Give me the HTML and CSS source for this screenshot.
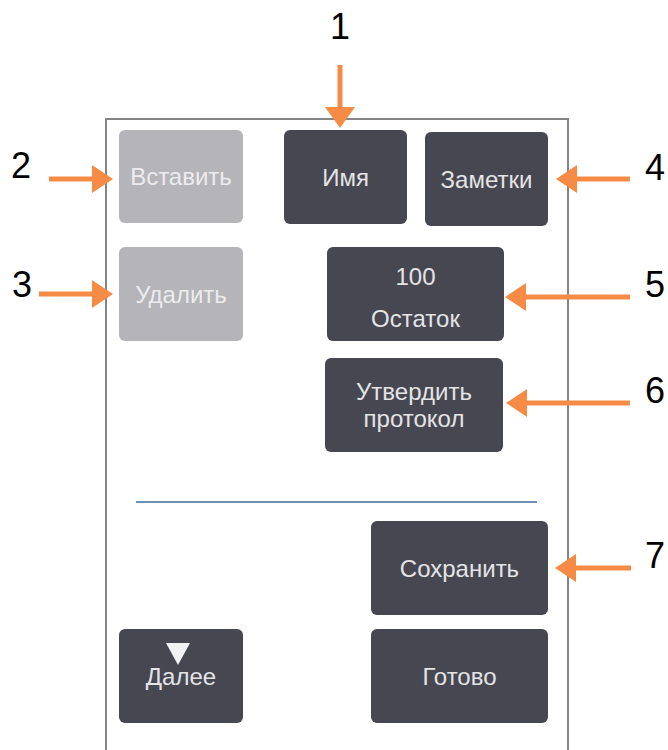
FILE: index.html
```html
<!DOCTYPE html>
<html lang="ru">
  <head>
    <meta charset="UTF-8" />
    <meta name="viewport" content="width=device-width, initial-scale=1.0" />
    <title>Протокол</title>
    <link rel="stylesheet" href="styles.css">
  </head>
  <body>
    <div class="page">
      <div class="panel">
        <div class="row row-top">
          <div class="btn btn-small btn-off">Вставить</div>
          <div class="btn btn-name">Имя</div>
          <div class="btn btn-notes">Заметки</div>
        </div>

        <div class="row row-second">
          <div class="btn btn-small btn-off">Удалить</div>
          <div class="btn btn-wide btn-rest">
            <span>100</span>
            <span>Остаток</span>
          </div>
        </div>

        <div class="row row-third">
          <div class="btn btn-wide btn-approve">Утвердить<br />протокол</div>
        </div>

        <div class="divider"></div>

        <div class="row row-save">
          <div class="btn btn-wide btn-save">Сохранить</div>
        </div>

        <div class="row row-bottom">
          <div class="btn btn-small btn-next">
            <span class="down"></span>
            <span>Далее</span>
          </div>
          <div class="btn btn-wide btn-done">Готово</div>
        </div>
      </div>

      <svg class="callouts" width="668" height="750" viewBox="0 0 668 750">
        <g class="arrow">
          <!-- 1 -->
          <rect x="337.5" y="65" width="5" height="44" />
          <polygon points="325,107 355,107 340,128" />
          <!-- 2 -->
          <rect x="49" y="176.5" width="45" height="5" />
          <polygon points="92,165 92,193 113,179" />
          <!-- 3 -->
          <rect x="39" y="291.5" width="55" height="5" />
          <polygon points="92,280 92,308 113,294" />
          <!-- 4 -->
          <rect x="575" y="176.5" width="55" height="5" />
          <polygon points="577,165 577,193 556,179" />
          <!-- 5 -->
          <rect x="524" y="294.5" width="106" height="5" />
          <polygon points="526,283 526,311 505,297" />
          <!-- 6 -->
          <rect x="525" y="400.5" width="105" height="5" />
          <polygon points="527,389 527,417 506,403" />
          <!-- 7 -->
          <rect x="574" y="565.5" width="57" height="5" />
          <polygon points="576,554 576,582 555,568" />
        </g>
        <g class="num">
          <text x="330" y="39">1</text>
          <text x="11" y="178">2</text>
          <text x="12" y="297">3</text>
          <text x="645" y="180">4</text>
          <text x="645" y="297">5</text>
          <text x="645" y="403">6</text>
          <text x="645" y="568">7</text>
        </g>
      </svg>
    </div>
  </body>
</html>
```

FILE: styles.css
```css
* {
  margin: 0;
  padding: 0;
  box-sizing: border-box;
}

body {
  font-family: "Liberation Sans", Arial, sans-serif;
  background: #fff;
  overflow: hidden;
}

.page {
  position: relative;
  width: 668px;
  height: 750px;
  padding: 118px 0 0 105px;
  overflow: hidden;
}

.panel {
  width: 464px;
  height: 720px;
  border: 2px solid #858585;
  border-bottom: none;
  padding: 10px 12px;
}

.row {
  display: flex;
  align-items: flex-start;
}

.btn {
  display: flex;
  flex-direction: column;
  align-items: center;
  justify-content: center;
  height: 94px;
  border-radius: 6px;
  background: #474751;
  color: #e4e4e6;
  font-size: 24px;
  line-height: 27px;
  text-align: center;
}

.btn-off {
  background: #b5b4b9;
  color: #ececee;
}

.btn-small {
  width: 124px;
}

.btn-wide {
  width: 177px;
}

/* first row */
.row-top .btn-small {
  height: 93px;
}

.btn-name {
  width: 123px;
  margin-left: 41px;
}

.btn-notes {
  width: 123px;
  margin-left: 18px;
  margin-top: 2px;
}

/* second row */
.row-second {
  margin-top: 21px;
}

.btn-rest {
  margin-left: 84px;
  line-height: 42px;
  padding-top: 7px;
}

/* third row */
.row-third {
  margin-top: 17px;
}

.btn-approve {
  width: 178px;
  margin-left: 206px;
}

.divider {
  margin: 49px 0 0 17px;
  width: 401px;
  height: 2px;
  background: #6f8fb0;
}

.row-save {
  margin-top: 18px;
}

.btn-save {
  margin-left: 252px;
}

.row-bottom {
  margin-top: 14px;
}

.btn-next {
  justify-content: flex-start;
  padding-top: 14px;
  line-height: 24px;
}

.down {
  width: 0;
  height: 0;
  border-left: 12.5px solid transparent;
  border-right: 12.5px solid transparent;
  border-top: 22px solid #f2f2f4;
  margin-left: -6px;
}

.btn-done {
  margin-left: 128px;
}

/* callout arrows and numbers over the screen */
.callouts {
  position: absolute;
  top: 0;
  left: 0;
}

.arrow {
  fill: #f68b45;
}

.num text {
  font-family: "Liberation Sans", Arial, sans-serif;
  font-size: 36px;
  fill: #000;
}
```
